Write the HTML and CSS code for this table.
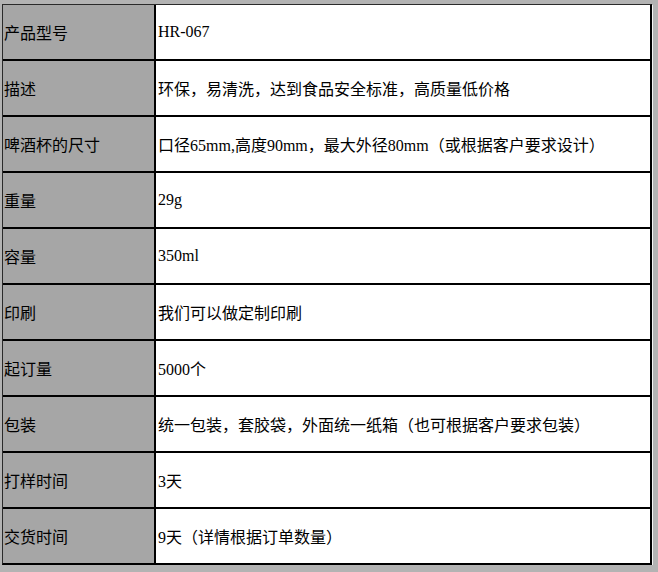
FILE: index.html
```html
<!DOCTYPE html>
<html lang="zh-CN">
<head>
<meta charset="utf-8">
<title>产品参数</title>
<link rel="stylesheet" href="styles.css">
</head>
<body>
<div class="spec">
  <div class="row"><div class="key">产品型号</div><div class="val">HR-067</div></div>
  <div class="row"><div class="key">描述</div><div class="val">环保，易清洗，达到食品安全标准，高质量低价格</div></div>
  <div class="row"><div class="key">啤酒杯的尺寸</div><div class="val">口径65mm,高度90mm，最大外径80mm（或根据客户要求设计）</div></div>
  <div class="row"><div class="key">重量</div><div class="val">29g</div></div>
  <div class="row"><div class="key">容量</div><div class="val">350ml</div></div>
  <div class="row"><div class="key">印刷</div><div class="val">我们可以做定制印刷</div></div>
  <div class="row"><div class="key">起订量</div><div class="val">5000个</div></div>
  <div class="row"><div class="key">包装</div><div class="val">统一包装，套胶袋，外面统一纸箱（也可根据客户要求包装）</div></div>
  <div class="row"><div class="key">打样时间</div><div class="val">3天</div></div>
  <div class="row"><div class="key">交货时间</div><div class="val">9天（详情根据订单数量）</div></div>
</div>
</body>
</html>
```
FILE: styles.css
```css
html, body {
  margin: 0;
  padding: 0;
  background: #b3b3b3;
}
body {
  padding: 4px 0 0 2px;
  font-family: "Liberation Serif", "Noto Sans CJK SC", serif;
  font-size: 16px;
  color: #000;
}
.spec {
  width: 647px;
  border-top: 1px solid #2a2a2a;
  border-left: 1px solid #2a2a2a;
  border-right: 2px solid #000;
  border-bottom: 2px solid #000;
  box-shadow: 1px 1px 0 #f4f4f4;
  display: flex;
  flex-direction: column;
}
.row {
  display: grid;
  grid-template-columns: 153px 1fr;
  height: 54px;
  border-bottom: 2px solid #000;
}
.row:last-child {
  border-bottom: none;
}
.key {
  background: #a6a6a6;
  border-right: 2px solid #000;
  display: flex;
  align-items: center;
  padding-left: 1px;
  white-space: nowrap;
}
.val {
  background: #fff;
  display: flex;
  align-items: center;
  padding-left: 2px;
  white-space: nowrap;
}
```
